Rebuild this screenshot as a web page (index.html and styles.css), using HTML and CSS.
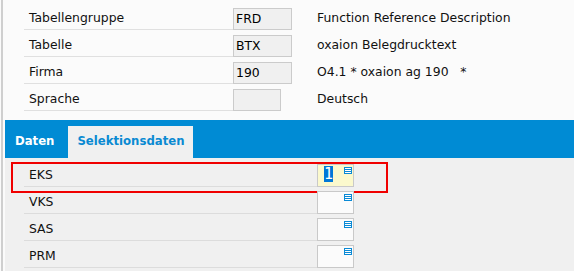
FILE: index.html
```html
<!DOCTYPE html>
<html lang="de">
<head>
<meta charset="UTF-8">
<title>Selektionsdaten</title>
<link rel="stylesheet" href="styles.css">
</head>
<body>
<div class="frame">
    <!-- Kopfdaten -->
    <div class="head">
        <div class="row">
            <span class="label">Tabellengruppe</span>
            <span class="cell"><span class="box">FRD</span></span>
            <span class="desc">Function Reference Description</span>
        </div>
        <div class="row">
            <span class="label">Tabelle</span>
            <span class="cell"><span class="box">BTX</span></span>
            <span class="desc">oxaion Belegdrucktext</span>
        </div>
        <div class="row">
            <span class="label">Firma</span>
            <span class="cell"><span class="box">190</span></span>
            <span class="desc">O4.1 * oxaion ag 190&nbsp;&nbsp;&nbsp;*</span>
        </div>
        <div class="row">
            <span class="label">Sprache</span>
            <span class="cell"><span class="box short"></span></span>
            <span class="desc">Deutsch</span>
        </div>
    </div>
    <!-- Reiter -->
    <div class="tabs">
        <div class="tab">Daten</div>
        <div class="tab active">Selektionsdaten</div>
    </div>
    <!-- Selektionsfelder -->
    <div class="panel">
        <div class="mark"></div>
        <div class="prow">
            <span class="plabel">EKS</span>
            <span class="field focus"><span class="sel">1</span><svg class="list" width="8" height="7" viewBox="0 0 8 7"><rect width="8" height="7" fill="#0a8ad6"/><rect x="1" y="1" width="6" height="1" fill="#fff"/><rect x="1" y="3" width="6" height="1" fill="#fff"/><rect x="1" y="5" width="6" height="1" fill="#fff"/></svg></span>
        </div>
        <div class="prow">
            <span class="plabel">VKS</span>
            <span class="field"><svg class="list" width="8" height="7" viewBox="0 0 8 7"><rect width="8" height="7" fill="#0a8ad6"/><rect x="1" y="1" width="6" height="1" fill="#fff"/><rect x="1" y="3" width="6" height="1" fill="#fff"/><rect x="1" y="5" width="6" height="1" fill="#fff"/></svg></span>
        </div>
        <div class="prow">
            <span class="plabel">SAS</span>
            <span class="field"><svg class="list" width="8" height="7" viewBox="0 0 8 7"><rect width="8" height="7" fill="#0a8ad6"/><rect x="1" y="1" width="6" height="1" fill="#fff"/><rect x="1" y="3" width="6" height="1" fill="#fff"/><rect x="1" y="5" width="6" height="1" fill="#fff"/></svg></span>
        </div>
        <div class="prow">
            <span class="plabel">PRM</span>
            <span class="field"><svg class="list" width="8" height="7" viewBox="0 0 8 7"><rect width="8" height="7" fill="#0a8ad6"/><rect x="1" y="1" width="6" height="1" fill="#fff"/><rect x="1" y="3" width="6" height="1" fill="#fff"/><rect x="1" y="5" width="6" height="1" fill="#fff"/></svg></span>
        </div>
    </div>
</div>
</body>
</html>
```

FILE: styles.css
```css
/* Grundeinstellungen */
* {
    margin: 0;
    padding: 0;
    box-sizing: border-box;
}
body {
    background: #fbfbfb;
    font-family: "DejaVu Sans", Verdana, sans-serif;
    font-size: 12.4px;
    color: #111;
}
.frame {
    margin-left: 1px;
    border-left: 2px solid #cfcfcf;
    height: 271px;
    display: flex;
    flex-direction: column;
}
/* Kopfdaten */
.head {
    padding-top: 3px;
}
.row {
    display: flex;
    align-items: flex-end;
    height: 27px;
}
.label {
    margin-left: 21px;
    width: 209px;
    height: 23px;
    line-height: 22px;
    padding-left: 5px;
    border-bottom: 1px solid #e0e0e0;
}
.cell {
    width: 84px;
}
.box {
    display: block;
    width: 59px;
    height: 22px;
    line-height: 20px;
    padding-left: 2px;
    border: 1px solid #cbcbcb;
    background: #f0f0f0;
    color: #000;
}
.box.short {
    width: 48px;
}
.desc {
    line-height: 22px;
    height: 23px;
}
/* Reiter */
.tabs {
    margin-top: 9px;
    margin-left: 2px;
    height: 38px;
    background: #008bd4;
    display: flex;
    align-items: flex-end;
}
.tab {
    height: 32px;
    line-height: 31px;
    font-size: 11.7px;
    font-weight: bold;
    color: #fff;
    padding: 0 14px 0 10px;
}
.tab.active {
    background: #f0f0f0;
    color: #0a8ad2;
    padding: 0 9px;
}
/* Selektionsfelder */
.panel {
    flex: 1;
    margin-left: 2px;
    background: #f0f0f0;
    padding-top: 2px;
    position: relative;
}
.mark {
    position: absolute;
    left: 6px;
    top: 4px;
    width: 377px;
    height: 31px;
    border: 2px solid #f00000;
}
.prow {
    display: flex;
    align-items: flex-end;
    height: 27px;
}
.plabel {
    margin-left: 19px;
    width: 293px;
    height: 23px;
    line-height: 22px;
    padding-left: 5px;
    border-bottom: 1px solid #dcdcdc;
}
.field {
    position: relative;
    width: 37px;
    height: 23px;
    border: 1px solid #c9c9c9;
    background: #fbfbfb;
}
.field.focus {
    background: #fbf9cd;
}
.sel {
    display: inline-block;
    margin: 1px 0 0 6px;
    background: #0078d7;
    color: #fff;
    font-family: "DejaVu Sans Mono", monospace;
    font-size: 15px;
    line-height: 16px;
}
.list {
    position: absolute;
    top: 2px;
    right: 1px;
}
```
